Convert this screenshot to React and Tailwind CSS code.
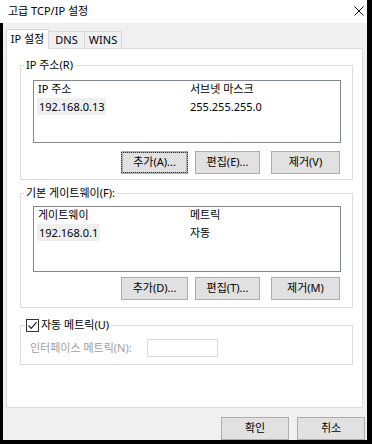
import React from 'react'

const btn =
  'h-[23px] bg-[#e1e1e1] border border-[#adadad] flex items-center justify-center text-black'

function ListView({ cols, row, height, colW = 152 }) {
  return (
    <div className={`ml-[12px] w-[308px] border border-[#828790] bg-white ${height}`}>
      <div className="flex h-[17px] items-center">
        <div className="pl-[4px]" style={{ width: colW }}>{cols[0]}</div>
        <div className="pl-[4px] flex-1">{cols[1]}</div>
      </div>
      <div className="flex h-[16px] items-center mt-[1px]">
        <div className="pl-[3px]" style={{ width: colW }}>
          <span className="bg-[#efefef] px-[2px] py-[1px]">{row[0]}</span>
        </div>
        <div className="pl-[4px] flex-1">{row[1]}</div>
      </div>
    </div>
  )
}

function Buttons({ labels, focus }) {
  return (
    <div className="flex pl-[100px]">
      <div className={`${btn} w-[67px] ${focus ? 'border-[#0078d7] border-2' : ''}`}>
        <span className={focus ? 'outline outline-1 outline-dotted outline-[#333] outline-offset-[1px] px-[10px]' : ''}>
          {labels[0]}
        </span>
      </div>
      <div className={`${btn} w-[65px] ml-[7px]`}>{labels[1]}</div>
      <div className={`${btn} w-[69px] ml-[11px]`}>{labels[2]}</div>
    </div>
  )
}

export default function App() {
  return (
    <div className="w-[372px] h-[444px] bg-black text-[11px] text-black font-['Noto_Sans','Noto_Sans_CJK_KR',sans-serif]">
      <div className="w-[367px] h-[440px] flex flex-col">
        {/* title bar */}
        <div className="h-[25px] bg-white flex items-center justify-between pl-[8px] pr-[3px]">
          <span className="text-[11px]">고급 TCP/IP 설정</span>
          <svg width="10" height="10" viewBox="0 0 10 10" className="mb-[1px]">
            <path d="M0.5 0.5 L9.5 9.5 M9.5 0.5 L0.5 9.5" stroke="#111" strokeWidth="1" fill="none" />
          </svg>
        </div>

        <div className="flex-1 bg-[#f0f0f0] border-l-[3px] border-black pl-[3px] pr-[4px] flex flex-col">
          {/* tabs */}
          <div className="flex items-end h-[26px] -mb-px relative z-10">
            <div className="w-[43px] h-[20px] bg-white border border-[#d9d9d9] border-b-white flex items-center justify-center">
              IP 설정
            </div>
            <div className="w-[36px] h-[18px] border border-l-0 border-[#d9d9d9] flex items-center justify-center">
              DNS
            </div>
            <div className="w-[37px] h-[18px] border border-l-0 border-[#d9d9d9] flex items-center justify-center">
              WINS
            </div>
          </div>

          {/* panel */}
          <div className="h-[360px] bg-white border border-[#d9d9d9] pt-[8px] pl-[13px]">
            <fieldset className="w-[333px] h-[123px] border border-[#dcdcdc]">
              <legend className="ml-[3px] px-[2px] leading-[16px]">IP 주소(R)</legend>
              <div className="mt-[7px]">
                <ListView cols={['IP 주소', '서브넷 마스크']} row={['192.168.0.13', '255.255.255.0']} height="h-[63px]" />
              </div>
              <div className="mt-[8px]">
                <Buttons labels={['추가(A)...', '편집(E)...', '제거(V)']} focus />
              </div>
            </fieldset>

            <fieldset className="w-[333px] h-[123px] border border-[#dcdcdc] mt-[5px]">
              <legend className="ml-[3px] px-[2px] leading-[16px]">기본 게이트웨이(F):</legend>
              <div className="mt-[5px]">
                <ListView cols={['게이트웨이', '메트릭']} row={['192.168.0.1', '자동']} height="h-[66px]" />
              </div>
              <div className="mt-[5px]">
                <Buttons labels={['추가(D)...', '편집(T)...', '제거(M)']} />
              </div>
            </fieldset>

            <fieldset className="w-[333px] h-[48px] border border-[#dcdcdc] mt-[9px]">
              <legend className="ml-[5px] leading-[16px] flex items-center pr-[2px]">
                <span className="w-[13px] h-[13px] border border-[#333] bg-white flex items-center justify-center mr-[2px]">
                  <svg width="11" height="11" viewBox="0 0 11 11">
                    <path d="M1.5 5.5 L4.2 8.3 L9.6 2.2" stroke="#222" strokeWidth="1.2" fill="none" />
                  </svg>
                </span>
                자동 메트릭(U)
              </legend>
              <div className="flex items-center mt-[6px] pl-[9px]">
                <span className="w-[117px] text-[#a0a0a0]">인터페이스 메트릭(N):</span>
                <div className="w-[71px] h-[18px] border border-[#d9d9d9] bg-white"></div>
              </div>
            </fieldset>
          </div>

          {/* dialog buttons */}
          <div className="flex justify-end mt-[9px] -mr-[2px] gap-[8px]">
            <div className={`${btn} w-[68px] h-[21px]`}>확인</div>
            <div className={`${btn} w-[68px] h-[21px]`}>취소</div>
          </div>
        </div>
      </div>
    </div>
  )
}
